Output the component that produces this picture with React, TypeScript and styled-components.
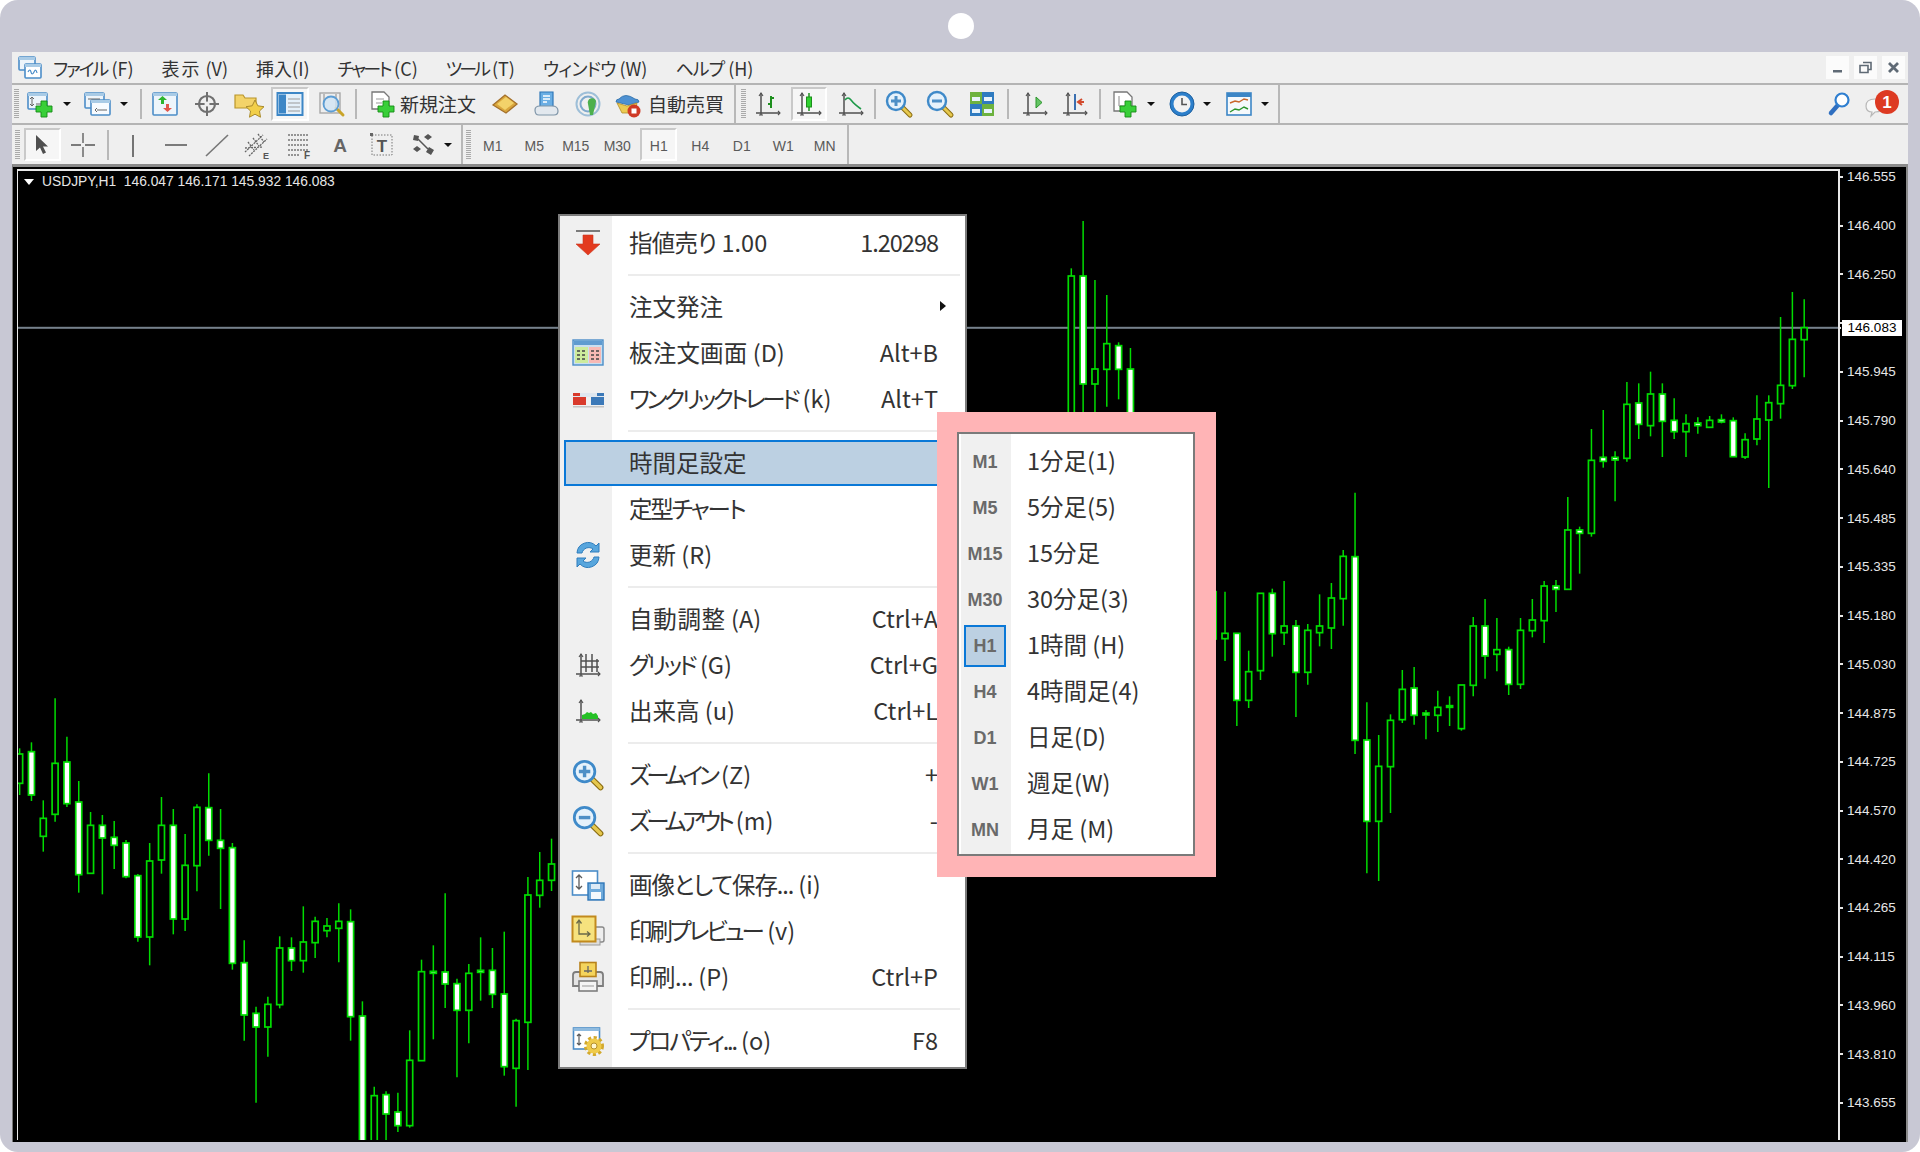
import React from "react";
import styled, { createGlobalStyle } from "styled-components";

const Global = createGlobalStyle`
  html, body { margin: 0; padding: 0; background: #fff; }
  body { font-family: "Noto Sans CJK JP", "Liberation Sans", sans-serif; }
`;

const JP = `"Noto Sans CJK JP", "Liberation Sans", sans-serif`;
const UI = `"Liberation Sans", Arial, sans-serif`;

const Frame = styled.div`
  width: 1920px; height: 1152px; background: #c8c8d4; border-radius: 18px;
  display: flex; flex-direction: column; overflow: hidden;
`;
const CameraBar = styled.div`height: 52px; flex: none; display: flex; align-items: center; justify-content: center; padding-left: 2px; box-sizing: border-box;`;
const CameraDot = styled.div`width: 26px; height: 26px; border-radius: 50%; background: #fff;`;
const Win = styled.div`
  margin: 0 12px; width: 1896px; height: 1088px; background: #efefef;
  display: flex; flex-direction: column; position: relative;
`;
const MenuBar = styled.div`
  height: 31px; flex: none; display: flex; align-items: center; padding-left: 6px;
  font: 18px ${JP}; font-feature-settings: "palt"; color: #333;
  border-bottom: 2px solid #b4b4b4; box-sizing: content-box;
`;
const MenuTitle = styled.span`margin-left: ${p => p.$ml}px; white-space: pre;`;
const Tight = styled.span`letter-spacing: ${p => p.$ls}px;`;
const WinBtns = styled.div`margin-left: auto; display: flex; gap: 5px; padding-right: 3px;`;
const WinBtn = styled.div`width: 23px; height: 23px; background: #fbfbfb; display: flex; align-items: center; justify-content: center;`;

const Toolbar = styled.div`
  height: ${p => p.$h}px; flex: none; display: flex; align-items: center;
  border-bottom: ${p => p.$line ? "2px solid #b4b4b4" : "none"};
`;
const GripWrap = styled.div`
  width: ${p => p.$w}px; flex: none; height: 100%; display: flex; align-items: center; padding-left: ${p => p.$pl}px; box-sizing: border-box;
`;
const Grip = styled.div`
  width: 5px; height: 30px;
  background: repeating-linear-gradient(180deg, #aaa 0 1px, transparent 1px 2px);
`;
const Btn = styled.div`
  width: ${p => p.$w}px; margin-left: ${p => p.$ml || 0}px; height: ${p => p.$h || 34}px; flex: none;
  display: flex; align-items: center; justify-content: center; box-sizing: border-box;
  ${p => p.$on ? `
    background: #f6f6f6;
    border-top: 2px solid #c9c9c9; border-left: 2px solid #c9c9c9;
    border-right: 2px solid #fff; border-bottom: 2px solid #fff;` : ""}
`;
const Drop = styled.div`
  width: ${p => p.$w}px; margin-left: ${p => p.$ml || 0}px; flex: none; display: flex; justify-content: center;
  &::after { content: ""; border-left: 4px solid transparent; border-right: 4px solid transparent; border-top: 4px solid #111; }
`;
const Sep = styled.div`
  width: ${p => p.$w}px; flex: none; height: 30px; display: flex; justify-content: center;
  &::after { content: ""; width: 2px; background: #b8b8b8; }
`;
const EndLine = styled.div`
  width: 2px; margin-left: ${p => p.$ml}px; align-self: stretch; flex: none; background: #b8b8b8;
`;
const ToolText = styled.div`
  width: ${p => p.$w}px; margin-left: ${p => p.$ml || 0}px; flex: none; padding-bottom: 2px;
  font: 19px ${JP}; color: #333; white-space: nowrap; letter-spacing: 0;
`;
const Period = styled.div`
  width: 37px; height: 33px; margin: 0 2.25px; flex: none; box-sizing: border-box; padding-top: 2px;
  display: flex; align-items: center; justify-content: center;
  font: 14px ${UI}; color: #5a5a5a;
  ${p => p.$on ? `
    background: #f6f6f6;
    border-top: 2px solid #c9c9c9; border-left: 2px solid #c9c9c9;
    border-right: 2px solid #fff; border-bottom: 2px solid #fff;` : ""}
`;
const ToolRight = styled.div`margin-left: auto; display: flex; align-items: center; gap: 14px; padding-right: 8px;`;

const Chart = styled.div`
  height: 973px; flex: none; background: #000; position: relative; display: flex; overflow: hidden;
  border-top: 3px solid #8b8b8b; border-left: 1px solid #777; border-right: 2px solid #8b8b8b;
  padding: 2px 0 0 4px; margin-top: 0; box-sizing: content-box; width: 1889px;
`;
const Plot = styled.div`
  width: 1820px; flex: none; border: solid #e8e8e8; border-width: 2px 2px 0 1px; height: 969px;
  svg { display: block; }
`;
const Scale = styled.div`
  flex: 1; margin-top: -16.4px; font: 13.5px ${UI}; color: #e6e6e6; position: relative;
`;
const ScaleRow = styled.div`
  height: 48.74px; display: flex; align-items: center; padding-left: 7px; position: relative;
  &::before { content: ""; position: absolute; left: 0; top: 50%; margin-top: -1px; width: 3px; height: 2px; background: #e8e8e8; }
`;
const CurrentPrice = styled.div`
  position: absolute; left: 1829px; top: 153px; width: 60px; height: 16px; background: #fff; color: #000;
  font: 13.5px/16px ${UI}; text-align: center;
  &::before { content: ""; position: absolute; left: -4px; top: 7px; width: 3px; height: 2px; background: #e8e8e8; }
`;
const ChartHead = styled.div`
  position: absolute; left: 11px; top: 7px; display: flex; align-items: center; gap: 8px;
  font: 13.8px/16px ${UI}; color: #e6e6e6; white-space: pre;
  &::before { content: ""; border-left: 5.5px solid transparent; border-right: 5.5px solid transparent; border-top: 6px solid #fff; }
`;

const Ctx = styled.div`
  position: absolute; left: 545px; top: 47px; width: 409px; height: 855px; box-sizing: border-box;
  border: 2px solid #7c7c7c; padding-top: 4px; color: #333;
  background: linear-gradient(90deg, #f0f0f0 52px, #fff 52px);
  font: 23.5px ${JP}; font-feature-settings: "palt";
`;
const CtxRow = styled.div`
  height: 46px; display: flex; align-items: center; box-sizing: border-box; padding-right: 27px; padding-bottom: 3px;
  ${p => p.$hl ? `margin-left: 4px; background: #bcd0e2; border: 2px solid #0a78d7; padding-left: 0;` : ""}
`;
const CtxIcon = styled.div`
  width: ${p => p.$hl ? 50 : 56}px; flex: none; display: flex; align-items: center; justify-content: center; margin-bottom: -3px;
`;
const CtxText = styled.span`margin-left: 13px; flex: 1; white-space: pre;`;
const CtxKey = styled.span`white-space: pre; letter-spacing: ${p => p.$ls || 0}px;`;
const Arrow = styled.span`
  border-left: 6px solid #111; border-top: 5px solid transparent; border-bottom: 5px solid transparent; margin-right: -8px;
`;
const CtxSep = styled.div`
  height: 18px; display: flex; align-items: center; padding: 0 5px 0 68px; box-sizing: border-box;
  &::after { content: ""; flex: 1; height: 2px; background: #ececec; }
`;

const Pink = styled.div`
  position: absolute; left: 924px; top: 245px; width: 279px; height: 465px; box-sizing: border-box;
  background: #ffb4b6; padding: 20px 21px 21px 20px;
`;
const Sub = styled.div`
  height: 100%; box-sizing: border-box; border: 2px solid #7a7a7a; padding-top: 5px; color: #333;
  background: linear-gradient(90deg, #fff 2px, #f0f0f0 2px, #f0f0f0 52px, #fff 52px);
  font: 23.5px ${JP}; font-feature-settings: "palt";
`;
const SubRow = styled.div`height: 46px; display: flex; align-items: center; padding-left: 5px;`;
const SubLabel = styled.div`
  width: 42px; height: 42px; flex: none; box-sizing: border-box; display: flex; align-items: center; justify-content: center;
  font: 700 18px ${UI}; color: #6a6a6a; margin-right: 21px;
  ${p => p.$on ? `background: #bcd0e2; border: 2px solid #0a78d7;` : ""}
`;
const SubText = styled.span`padding-bottom: 4px;`;

type C = [number, number, number, number, number];
const groupA: C[] = [
[205,222,310,345,0],[187,215,345,363,1],[361,415,469,515,0],[55,250,403,425,0],[170,246,371,381,1],[303,366,584,638,1],[396,436,580,580,0],[405,436,474,643,1],[423,472,496,567,1],[480,489,590,595,1],[582,587,771,785,1],[489,543,771,856,0],[351,436,540,581,0],[387,436,717,763,1],[462,556,717,753,0],[373,382,557,634,0],[280,383,481,527,1],[387,481,505,687,1],[489,503,850,869,1],[781,848,1005,1082,1],[980,1000,1041,1268,1],[950,973,1041,1130,0],[769,804,974,985,0],[772,804,842,873,1],[679,786,842,878,0],[710,724,788,834,0],[714,738,752,772,0],[670,724,745,847,0],[688,725,1010,1082,1],[964,1008,1600,1600,1],[1220,1247,1600,1600,0],[1234,1244,1302,1600,1],[1238,1296,1337,1356,1],[1051,1141,1337,1343,0],[839,875,1142,1142,0],[796,874,880,1078,1],[640,876,912,984,1],[896,911,991,1192,1],[852,880,991,1090,0],[772,871,877,962,1],[804,871,943,984,1],[755,942,1160,1187,1],[1016,1022,1165,1280,0],[591,645,1027,1170,0],[516,601,646,683,0],[476,552,601,633,0]];
const groupB: C[] = [[205,228,900,900,0],[63,228,552,900,1],[240,507,552,900,0],[285,431,508,620,0],[427,437,508,598,1],[444,507,900,900,1]];
const groupC: C[] = [
[425,425,567,567,0],[425,550,566,633,0],[550,550,751,828,1],[602,665,751,774,0],[430,430,662,690,0],[416,430,551,620,1],[393,528,548,585,0],[510,528,667,801,1],[522,541,667,704,0],[433,528,548,589,0],[399,444,534,597,0],[300,319,446,527,0],[128,320,871,912,1],[757,870,1114,1270,1],[855,949,1114,1293,0],[793,811,950,1089,0],[660,718,809,819,0],[651,714,796,824,1],[780,789,795,868,1],[722,772,796,846,0],[739,767,772,828,1],[705,705,836,842,0],[501,528,706,739,0],[447,528,618,686,1],[504,599,613,664,0],[590,599,703,735,1],[504,541,703,717,0],[447,510,542,562,0],[393,408,512,579,0],[390,408,418,486,1],[141,240,418,418,0],[230,240,250,371,1],[-63,31,250,260,0],[-120,22,34,53,1],[4,22,30,154,1],[-204,-137,25,35,0],[-200,-141,-77,-33,1],[-235,-168,-73,-41,0],[-200,-168,-86,21,1],[-155,-89,-55,-33,1],[-107,-79,-55,21,0],[-98,-81,-73,-49,1],[-102,-89,-68,-68,0],[-107,-91,-84,-80,1],[-98,-88,20,20,1],[-50,-31,21,27,0],[-164,-93,-33,-14,0],[-164,-142,-90,114,0],[-399,-194,-139,-94,0],[-474,-332,-193,-183,0],[-452,-367,-331,-218,0]];
const GREEN = "#00dc00";
function Candles({ rows, x0, dx, off }: { rows: C[]; x0: number; dx: number; off: number }) {
  return <>{rows.map((r, i) => {
    const x = x0 + i * dx; const y = (v: number) => off + v / 3;
    return <g key={i}>
      <line x1={x} x2={x} y1={y(r[0])} y2={y(r[3])} stroke={GREEN} strokeWidth={1.5} />
      <rect x={x - 3} width={6} y={y(r[1])} height={Math.max(y(r[2]) - y(r[1]), 1)} fill={r[4] ? "#fff" : "#000"} stroke={GREEN} strokeWidth={1.7} />
    </g>;
  })}</>;
}

const Tx = ({ t, ls }: { t: string; ls?: number }) => {
  const cut = t.lastIndexOf(" ");
  if (!ls) return <>{t}</>;
  if (cut < 0) return <Tight $ls={ls}>{t}</Tight>;
  return <><Tight $ls={ls}>{t.slice(0, cut)}</Tight>{t.slice(cut)}</>;
};

const I = ({ w = 28, h = 28, vw, vh, children }: { w?: number; h?: number; vw?: number; vh?: number; children: React.ReactNode }) =>
  <svg width={w} height={h} viewBox={`0 0 ${vw || w} ${vh || h}`} style={{ display: "block", overflow: "visible" }}>{children}</svg>;

const Plus = ({ cx, cy, r = 8, t = 3 }: { cx: number; cy: number; r?: number; t?: number }) =>
  <path d={`M${cx - t} ${cy - r}h${2 * t}v${r - t}h${r - t}v${2 * t}h${t - r}v${r - t}h${-2 * t}v${t - r}h${t - r}v${-2 * t}h${r - t}z`} fill="#38cf38" stroke="#158a15" strokeWidth=".9" />;

const Axes = ({ c = "#505050" }: { c?: string }) => <g stroke={c} strokeWidth="1.5" fill="none">
  <path d="M7 3V25M2 23H26" />
  <path d="M5 6l2-3 2 3M24 21l2 2-2 2M5 25h4" strokeWidth="1.1" />
</g>;

const Loupe = ({ minus, plus, s = 28 }: { minus?: boolean; plus?: boolean; s?: number }) => <I w={s} h={s} vw={28} vh={28}>
  <path d="M17 17l8 8" stroke="#8a6c10" strokeWidth="5" strokeLinecap="round" />
  <path d="M17 17l8 8" stroke="#e6c84e" strokeWidth="3" strokeLinecap="round" />
  <circle cx="11" cy="11" r="9" fill="#e6f2fb" stroke="#3f8ac9" strokeWidth="2.4" />
  {(plus || minus) && <path d={plus ? "M6 11h10M11 6v10" : "M6 11h10"} stroke="#4d8fc6" strokeWidth="3" />}
</I>;

const Win2 = ({ x, y, w, h, f = "#eef5fb" }: { x: number; y: number; w: number; h: number; f?: string }) => <g>
  <rect x={x} y={y} width={w} height={h} fill={f} stroke="#4b8dc8" strokeWidth="1.6" rx="1" />
  <rect x={x} y={y} width={w} height="3" fill="#a9cbe6" />
</g>;

const icons: Record<string, React.ReactNode> = {
  down: <I><path d="M2 2h24" stroke="#555" strokeWidth="1.5" /><path d="M9 6h10v9h7L14 26 2 15h7z" fill="#e33a1f" stroke="#c9381f" strokeWidth=".6" /></I>,
  board: <I w={32} h={28}><rect x="1" y="1" width="30" height="25" fill="#c9dff0" stroke="#4b8dc8" strokeWidth="1.4" /><rect x="2" y="2" width="28" height="4" fill="#5f9bd0" /><rect x="3" y="8" width="13" height="16" fill="#cdeb9c" /><rect x="17" y="8" width="12" height="16" fill="#f7b9b5" /><path d="M5 12h3M10 12h3M5 16h3M10 16h3M5 20h3M10 20h3M19 12h3M24 12h3M19 16h3M24 16h3M19 20h3M24 20h3" stroke="#444" strokeWidth="1.5" /></I>,
  oneclick: <I w={32} h={28}><rect x="1" y="8" width="13" height="12" fill="#d93a2b" /><rect x="19" y="8" width="13" height="12" fill="#3c79b8" /><rect x="1" y="8" width="31" height="4" fill="#dfe7ef" /><rect x="1" y="8" width="7" height="3" fill="#d93a2b" /><rect x="25" y="8" width="7" height="3" fill="#3c79b8" /><rect x="1" y="21" width="31" height="1.5" fill="#c4c4c4" /></I>,
  refresh: <I w={30} h={32}><path d="M4 14A11 11 0 0 1 23 7l3-3v9h-9l3-3A7 7 0 0 0 9 14z" fill="#58a6dd" stroke="#2f7dbd" strokeWidth="1" /><path d="M26 18A11 11 0 0 1 7 25l-3 3v-9h9l-3 3a7 7 0 0 0 11-4z" fill="#58a6dd" stroke="#2f7dbd" strokeWidth="1" /></I>,
  grid: <I><Axes /><path d="M12 3v18M18 3v18M23 8v13M7 10h18M7 16h18" stroke="#505050" strokeWidth="1.5" fill="none" /></I>,
  volume: <I><Axes /><path d="M8 22v-4l3-1 2-2 2 1 2-1 2 2 3-1 2 3v3z" fill="#25c025" /></I>,
  zin: <Loupe plus s={32} />,
  zout: <Loupe minus s={32} />,
  saveimg: <I w={34} h={32}><rect x="1.500" y="2" width="25" height="24" fill="#fff" stroke="#4b8dc8" strokeWidth="1.600" /><path d="M8 6v14M5 9l3-3 3 3M5 17l3 3 3-3" stroke="#5c5c5c" strokeWidth="1.300" fill="none" /><rect x="17" y="14" width="16" height="17" fill="#6eaadb" stroke="#2f77b8" strokeWidth="1.400" /><rect x="20" y="15" width="9" height="5" fill="#ddeaf6" /><rect x="20" y="23" width="10" height="7" fill="#f5f9fc" /></I>,
  preview: <I w={34} h={32}><rect x="21" y="12" width="12" height="15" fill="#eee" stroke="#888" strokeWidth="1.400" rx="2" /><rect x="9" y="24" width="20" height="6" fill="#ddd" stroke="#999" /><rect x="1.500" y="1.500" width="23" height="25" fill="#f6e27e" stroke="#c28a1d" strokeWidth="2" /><path d="M8 6v13h11M5.500 8.500L8 5l2.500 3.500M16 16.500l3 2.500-3 2.500" stroke="#6a6a4a" strokeWidth="1.300" fill="none" /></I>,
  print: <I w={34} h={32}><path d="M2 14q0-3 3-3h24q3 0 3 3v11H2z" fill="#e4e4e4" stroke="#7d7d7d" strokeWidth="1.800" /><rect x="9" y="1.500" width="16" height="14" fill="#f4d45c" stroke="#b8821a" strokeWidth="1.600" /><path d="M17 5v7M13 10h8" stroke="#666" strokeWidth="1.300" /><rect x="8" y="20" width="18" height="10" fill="#f4f4f4" stroke="#7d7d7d" strokeWidth="1.600" /><path d="M11 25h12" stroke="#999" /></I>,
  props: <I w={32} h={30}><rect x="1.500" y="2" width="26" height="21" fill="#fff" stroke="#4b8dc8" strokeWidth="1.600" /><rect x="1.500" y="2" width="26" height="3" fill="#8fbbdf" /><path d="M7 8v11M5 10l2-2 2 2M5 17l2 2 2-2" stroke="#5c5c5c" strokeWidth="1.200" fill="none" /><circle cx="22" cy="20" r="8" fill="none" stroke="#d3a92c" strokeWidth="4" strokeDasharray="3 2.300" /><circle cx="22" cy="20" r="7.500" fill="#efcb4a" /><circle cx="22" cy="20" r="3" fill="#fff6cc" stroke="#b5902a" /></I>,
};

type Row = { k: "sep" } | { k: "row"; t: string; s?: string; i?: string; arrow?: boolean; hl?: boolean; ls?: number; kls?: number };
const rows: Row[] = [
  { k: "row", t: "指値売り 1.00", s: "1.20298", i: "down", ls: -0.7, kls: -1 }, { k: "sep" },
  { k: "row", t: "注文発注", arrow: true },
  { k: "row", t: "板注文画面 (D)", s: "Alt+B", i: "board", ls: 0.2 },
  { k: "row", t: "ワンクリックトレード (k)", s: "Alt+T", i: "oneclick", ls: -3.4 }, { k: "sep" },
  { k: "row", t: "時間足設定", hl: true },
  { k: "row", t: "定型チャート", ls: -2.2 },
  { k: "row", t: "更新 (R)", i: "refresh" }, { k: "sep" },
  { k: "row", t: "自動調整 (A)", s: "Ctrl+A", ls: 0.7 },
  { k: "row", t: "グリッド (G)", s: "Ctrl+G", i: "grid", ls: -3 },
  { k: "row", t: "出来高 (u)", s: "Ctrl+L", i: "volume" }, { k: "sep" },
  { k: "row", t: "ズームイン (Z)", s: "+", i: "zin", ls: -4.2 },
  { k: "row", t: "ズームアウト (m)", s: "-", i: "zout", ls: -4.3 }, { k: "sep" },
  { k: "row", t: "画像として保存... (i)", i: "saveimg", ls: -1.1 },
  { k: "row", t: "印刷プレビュー (v)", i: "preview", ls: -3 },
  { k: "row", t: "印刷... (P)", s: "Ctrl+P", i: "print", ls: -0.5 }, { k: "sep" },
  { k: "row", t: "プロパティ... (o)", s: "F8", i: "props", ls: -2.2 },
];
const periods: [string, string, boolean?][] = [
  ["M1", "1分足(1)"], ["M5", "5分足(5)"], ["M15", "15分足"], ["M30", "30分足(3)"], ["H1", "1時間 (H)", true],
  ["H4", "4時間足(4)"], ["D1", "日足(D)"], ["W1", "週足(W)"], ["MN", "月足 (M)"],
];
const prices = ["146.555","146.400","146.250","","145.945","145.790","145.640","145.485","145.335","145.180","145.030","144.875","144.725","144.570","144.420","144.265","144.115","143.960","143.810","143.655"];

const AppLogo = () => <I w={24} h={24}>
  <Win2 x={1} y={1} w={16} h={13} />
  <Win2 x={7} y={8} w={16} h={14} f="#fff" />
  <path d="M10 16q2-4 3 0t3 0 3 1" stroke="#4b8dc8" strokeWidth="1.2" fill="none" />
</I>;

export default function App() {
  return <>
    <Global />
    <Frame>
      <CameraBar><CameraDot /></CameraBar>
      <Win>
        <MenuBar>
          <AppLogo />
          <MenuTitle $ml={11}><Tx t="ファイル (F)" ls={-2} /></MenuTitle>
          <MenuTitle $ml={28}><Tx t="表示 (V)" ls={2} /></MenuTitle>
          <MenuTitle $ml={28}>挿入(I)</MenuTitle>
          <MenuTitle $ml={28}><Tx t="チャート (C)" ls={-2.500} /></MenuTitle>
          <MenuTitle $ml={28}><Tx t="ツール (T)" ls={-3} /></MenuTitle>
          <MenuTitle $ml={28}><Tx t="ウィンドウ (W)" ls={-0.8} /></MenuTitle>
          <MenuTitle $ml={28}><Tx t="ヘルプ (H)" ls={-1} /></MenuTitle>
          <WinBtns>
            <WinBtn><I w={13} h={13}><rect x="2" y="9" width="9" height="2.500" fill="#5f6a75" /></I></WinBtn>
            <WinBtn><I w={13} h={13}><path d="M4 1.500h8v7h-3M1 4.500h8v7H1z" stroke="#5f6a75" strokeWidth="1.600" fill="none" /></I></WinBtn>
            <WinBtn><I w={13} h={13}><path d="M2 2l9 9M11 2l-9 9" stroke="#5f6a75" strokeWidth="2.800" /></I></WinBtn>
          </WinBtns>
        </MenuBar>

        <Toolbar $h={38} $line>
          <GripWrap $w={14} $pl={2}><Grip /></GripWrap>
          <Btn $w={28}><I><Win2 x={2} y={3} w={19} h={16} /><path d="M6 7v9M4 9l2-2 2 2M4 14l2 2 2-2M10 14h8" stroke="#666" strokeWidth="1" fill="none" /><Plus cx={18} cy={19} /></I></Btn>
          <Drop $w={26} />
          <Btn $w={34}><I><Win2 x={2} y={3} w={19} h={15} /><Win2 x={8} y={10} w={19} h={15} f="#f7fbff" /><path d="M5 9h12M14 20h10M12 20l2-2M12 20l2 2" stroke="#666" strokeWidth="1" fill="none" /></I></Btn>
          <Drop $w={20} />
          <Sep $w={14} />
          <Btn $w={34}><I><Win2 x={2} y={3} w={24} h={22} /><path d="M10 14v-4H7l4.500-4L16 10h-3v4z" fill="#2eb52e" /><path d="M15 14v4h-3l4.500 4 4.500-4h-3v-4z" fill="#e2574c" /></I></Btn>
          <Btn $w={42} $ml={4}><I><circle cx="14" cy="14" r="8" fill="none" stroke="#707070" strokeWidth="2.200" /><path d="M14 2v24M2 14h24" stroke="#707070" strokeWidth="2" /><circle cx="14" cy="14" r="2.500" fill="#efefef" /></I></Btn>
          <Btn $w={42}><I w={30}><path d="M1 5h8l2 3h11v10H1z" fill="#f3d369" stroke="#b9952b" strokeWidth="1.200" /><path d="M21 10l2.800 5.800 6.200.9-4.500 4.300 1 6.200-5.500-3-5.500 3 1-6.200-4.500-4.300 6.200-.9z" fill="#f2cf49" stroke="#a98a2c" strokeWidth="1" /></I></Btn>
          <Btn $w={38} $ml={1} $on><I><rect x="1.500" y="3" width="25" height="22" fill="#e4f0fa" stroke="#3c86c6" strokeWidth="2" /><rect x="3" y="4.500" width="7" height="19" fill="#3c86c6" /><path d="M12 9h12M12 13h12M12 17h12M12 21h12" stroke="#9a9a9a" strokeWidth="1" /></I></Btn>
          <Btn $w={42} $ml={2}><I><rect x="2" y="3" width="20" height="20" fill="#eee" stroke="#a8a8a8" strokeWidth="1.400" /><path d="M6 4v13M18 4v13" stroke="#888" /><path d="M18 18l7 7" stroke="#c9a428" strokeWidth="3" strokeLinecap="round" /><circle cx="13" cy="14" r="7.500" fill="#cfe4f4" fillOpacity=".8" stroke="#5c9dd4" strokeWidth="1.800" /></I></Btn>
          <Sep $w={6} />
          <Btn $w={36} $ml={5}><I><path d="M4 2h12l5 5v12H4z" fill="#fff" stroke="#777" strokeWidth="1.300" /><path d="M8 9h8M8 13h6" stroke="#999" /><Plus cx={18} cy={19} /></I></Btn>
          <ToolText $w={76}>新規注文</ToolText>
          <Btn $w={42} $ml={8}><I><path d="M2 15L14 5l12 9-11 9z" fill="#d9a63c" stroke="#a4702a" strokeWidth="1.300" /><path d="M6 14l9-7 8 6-9 7z" fill="#f3d26a" /></I></Btn>
          <Btn $w={40}><I><path d="M8 2h13v15H8z" fill="#6aaee4" stroke="#2f77b8" strokeWidth="1.200" /><path d="M11 6h7M11 9h7M11 12h4" stroke="#fff" strokeWidth="1.400" /><path d="M3 20q0-4 5-4h12q6 0 6 5 0 4-4 4H7q-4 0-4-5z" fill="#e2e8ee" stroke="#7f95a8" strokeWidth="1.200" /></I></Btn>
          <Btn $w={42} $ml={1}><I><g fill="none"><circle cx="14" cy="14" r="11.500" stroke="#9ebfd8" strokeWidth="2" /><circle cx="14" cy="14" r="7.500" stroke="#7fa9cc" strokeWidth="2" /></g><path d="M14 14a4 4 0 0 1 8-3l-3 14h-3z" fill="#4db04d" /></I></Btn>
          <Btn $w={38}><I w={30}><path d="M3 12q0-3 3-3 6-7 16 0 4 0 4 3l-10 3z" fill="#4e91d2" stroke="#2d6ea8" strokeWidth=".8" /><path d="M4 13l10 3 10-3-2 10H9z" fill="#eccb52" stroke="#b08d2a" strokeWidth=".8" /><circle cx="21" cy="21" r="6.500" fill="#cf3a26" /><rect x="18.500" y="18.500" width="5" height="5" fill="#fff" /></I></Btn>
          <ToolText $w={75} $ml={1}>自動売買</ToolText>
          <EndLine $ml={11} />
          <GripWrap $w={14} $pl={5}><Grip /></GripWrap>
          <Btn $w={36}><I><Axes /><path d="M17 6v12M14 14h3M17 8h3" stroke="#1d8f1d" strokeWidth="2" fill="none" /></I></Btn>
          <Btn $w={36} $ml={5} $on><I><Axes /><path d="M14 3v18" stroke="#1d8f1d" strokeWidth="1.500" /><rect x="11.500" y="7" width="5" height="10" fill="#2fd12f" stroke="#1d8f1d" /></I></Btn>
          <Btn $w={42} $ml={3}><I><Axes /><path d="M8 10q3-4 6 0t10 9" stroke="#1f9a4a" strokeWidth="1.600" fill="none" /></I></Btn>
          <Sep $w={6} />
          <Btn $w={42}><Loupe plus /></Btn>
          <Btn $w={40}><Loupe minus /></Btn>
          <Btn $w={42} $ml={1}><I><rect x="2" y="2" width="12" height="12" fill="#6db23f" /><rect x="14" y="2" width="12" height="12" fill="#2f7bc0" /><rect x="2" y="14" width="12" height="12" fill="#2f7bc0" /><rect x="14" y="14" width="12" height="12" fill="#6db23f" /><path d="M4 7h8v4H4zM16 7h8v4h-8zM4 19h8v4H4zM16 19h8v4h-8z" fill="#e8f3fb" /></I></Btn>
          <Sep $w={10} />
          <Btn $w={42} $ml={1}><I><Axes /><path d="M15 7v11l6-5.500z" fill="#64c464" stroke="#2b952b" /></I></Btn>
          <Btn $w={38}><I><Axes /><path d="M14 4v16" stroke="#3a6fb0" strokeWidth="2" /><path d="M23 12h-5M21 9l-4 3 4 3" stroke="#d24a2d" strokeWidth="2" fill="none" /></I></Btn>
          <Sep $w={12} />
          <Btn $w={38}><I><path d="M3 2h13l5 5v14H3z" fill="#fff" stroke="#777" strokeWidth="1.300" /><path d="M8 6v10h8" stroke="#888" fill="none" /><Plus cx={17} cy={19} /></I></Btn>
          <Drop $w={14} />
          <Btn $w={40} $ml={4}><I><circle cx="14" cy="14" r="12" fill="#2c7fcb" stroke="#1d5f9e" strokeWidth="1" /><circle cx="14" cy="14" r="8.500" fill="#f2f2f2" /><path d="M14 8v6.500h5" stroke="#555" strokeWidth="1.600" fill="none" /></I></Btn>
          <Drop $w={10} />
          <Btn $w={42} $ml={6}><I><rect x="2" y="3" width="24" height="22" fill="#f5f9fc" stroke="#3c86c6" strokeWidth="1.600" /><rect x="2" y="3" width="24" height="4" fill="#3c86c6" /><path d="M5 13l5-2 4 1 5-3 4 1" stroke="#c9672c" strokeWidth="1.400" fill="none" /><path d="M5 22l5-3 4 1 5-3 4 2" stroke="#2b952b" strokeWidth="1.400" fill="none" /></I></Btn>
          <Drop $w={10} />
          <EndLine $ml={8} />
          <ToolRight>
            <I w={22} h={24}><path d="M10 13l-7 8" stroke="#2f6fc0" strokeWidth="4.500" strokeLinecap="round" /><circle cx="14" cy="8" r="6.500" fill="#fff" stroke="#2f7fd0" strokeWidth="2.200" /></I>
            <I w={36} h={30}><path d="M2 17q0-7 9-7 8 0 8 7 0 6-8 6l-4 4 1-4q-6 0-6-6z" fill="#f7f7f7" stroke="#b8b8b8" strokeWidth="1.200" /><circle cx="23" cy="13" r="12" fill="#dd3a22" /><text x="23" y="19" textAnchor="middle" fontFamily="Liberation Sans" fontWeight="700" fontSize="17" fill="#fff">1</text></I>
          </ToolRight>
        </Toolbar>

        <Toolbar $h={39}>
          <GripWrap $w={12} $pl={3}><Grip /></GripWrap>
          <Btn $w={37} $on $h={33}><I w={22} h={22}><path d="M4 1v16l4-3.500 3 6.500 3-1.500-3-6h5z" fill="#4f4f4f" /></I></Btn>
          <Btn $w={42} $ml={1}><I><path d="M14 2v10M14 16v10M2 14h10M16 14h10" stroke="#555" strokeWidth="1.300" /></I></Btn>
          <Sep $w={8} />
          <Btn $w={42}><I><path d="M14 4v22" stroke="#555" strokeWidth="1.600" /></I></Btn>
          <Btn $w={42} $ml={1}><I><path d="M3 14h22" stroke="#555" strokeWidth="1.600" /></I></Btn>
          <Btn $w={40}><I><path d="M3 25L25 4" stroke="#777" strokeWidth="1.600" /></I></Btn>
          <Btn $w={40}><I><path d="M2 21L20 4M6 25L24 8M5 11l6 8M10 7l6 8M15 3l6 8M2 17l18-1" stroke="#666" strokeWidth="1.300" strokeDasharray="2 1" /><text x="20" y="28" fontFamily="Liberation Sans" fontWeight="700" fontSize="9" fill="#555">E</text></I></Btn>
          <Btn $w={42} $ml={1}><I><path d="M3 4h20M3 9h20M3 14h20M3 19h20M3 24h12" stroke="#777" strokeWidth="1.300" strokeDasharray="2 1" /><text x="19" y="28" fontFamily="Liberation Sans" fontWeight="700" fontSize="10" fill="#555">F</text></I></Btn>
          <Btn $w={40}><I><text x="14" y="21" textAnchor="middle" fontFamily="Liberation Sans" fontWeight="700" fontSize="19" fill="#666">A</text></I></Btn>
          <Btn $w={42} $ml={1}><I><rect x="4" y="4" width="20" height="20" fill="none" stroke="#777" strokeDasharray="1.500 1.500" /><rect x="2" y="2" width="3" height="3" fill="#666" /><text x="14" y="21" textAnchor="middle" fontFamily="Liberation Sans" fontWeight="700" fontSize="17" fill="#555">T</text></I></Btn>
          <Btn $w={40}><I><path d="M5 4l5 1-1 5-5-1zM20 16l5 3-3 5-5-3zM4 18l4-3 4 3-4 3zM15 6l4-3 4 3-4 3z" fill="#555" /><path d="M9 8l10 10" stroke="#555" strokeWidth="1.500" /></I></Btn>
          <Drop $w={10} />
          <EndLine $ml={8} />
          <GripWrap $w={9} $pl={3}><Grip /></GripWrap>
          {["M1","M5","M15","M30","H1","H4","D1","W1","MN"].map(p => <Period key={p} $on={p === "H1"}>{p}</Period>)}
          <EndLine $ml={1.25} />
        </Toolbar>

        <Chart>
          <Plot>
            <svg width={1820} height={969} viewBox="18 171 1820 969">
              <rect x="18" y="326.800" width="1820" height="2" fill="#76818c" />
              <Candles rows={groupA} x0={19.64} dx={11.82} off={680} />
              <Candles rows={groupB} x0={1071.3} dx={11.83} off={200} />
              <Candles rows={groupC} x0={1213.2} dx={11.82} off={450} />
            </svg>
          </Plot>
          <Scale>{prices.map((p, i) => <ScaleRow key={i}>{p}</ScaleRow>)}</Scale>
          <CurrentPrice>146.083</CurrentPrice>
          <ChartHead>{"USDJPY,H1  146.047 146.171 145.932 146.083"}</ChartHead>

          <Ctx>
            {rows.map((r, i) => r.k === "sep" ? <CtxSep key={i} /> :
              <CtxRow key={i} $hl={r.hl}>
                <CtxIcon $hl={r.hl}>{r.i ? icons[r.i] : null}</CtxIcon>
                <CtxText><Tx t={r.t} ls={r.ls} /></CtxText>
                {r.s && <CtxKey $ls={r.kls}>{r.s}</CtxKey>}
                {r.arrow && <Arrow />}
              </CtxRow>)}
          </Ctx>
          <Pink>
            <Sub>
              {periods.map(([k, t, on]) => <SubRow key={k}><SubLabel $on={on}>{k}</SubLabel><SubText>{t}</SubText></SubRow>)}
            </Sub>
          </Pink>
        </Chart>
      </Win>
    </Frame>
  </>;
}
